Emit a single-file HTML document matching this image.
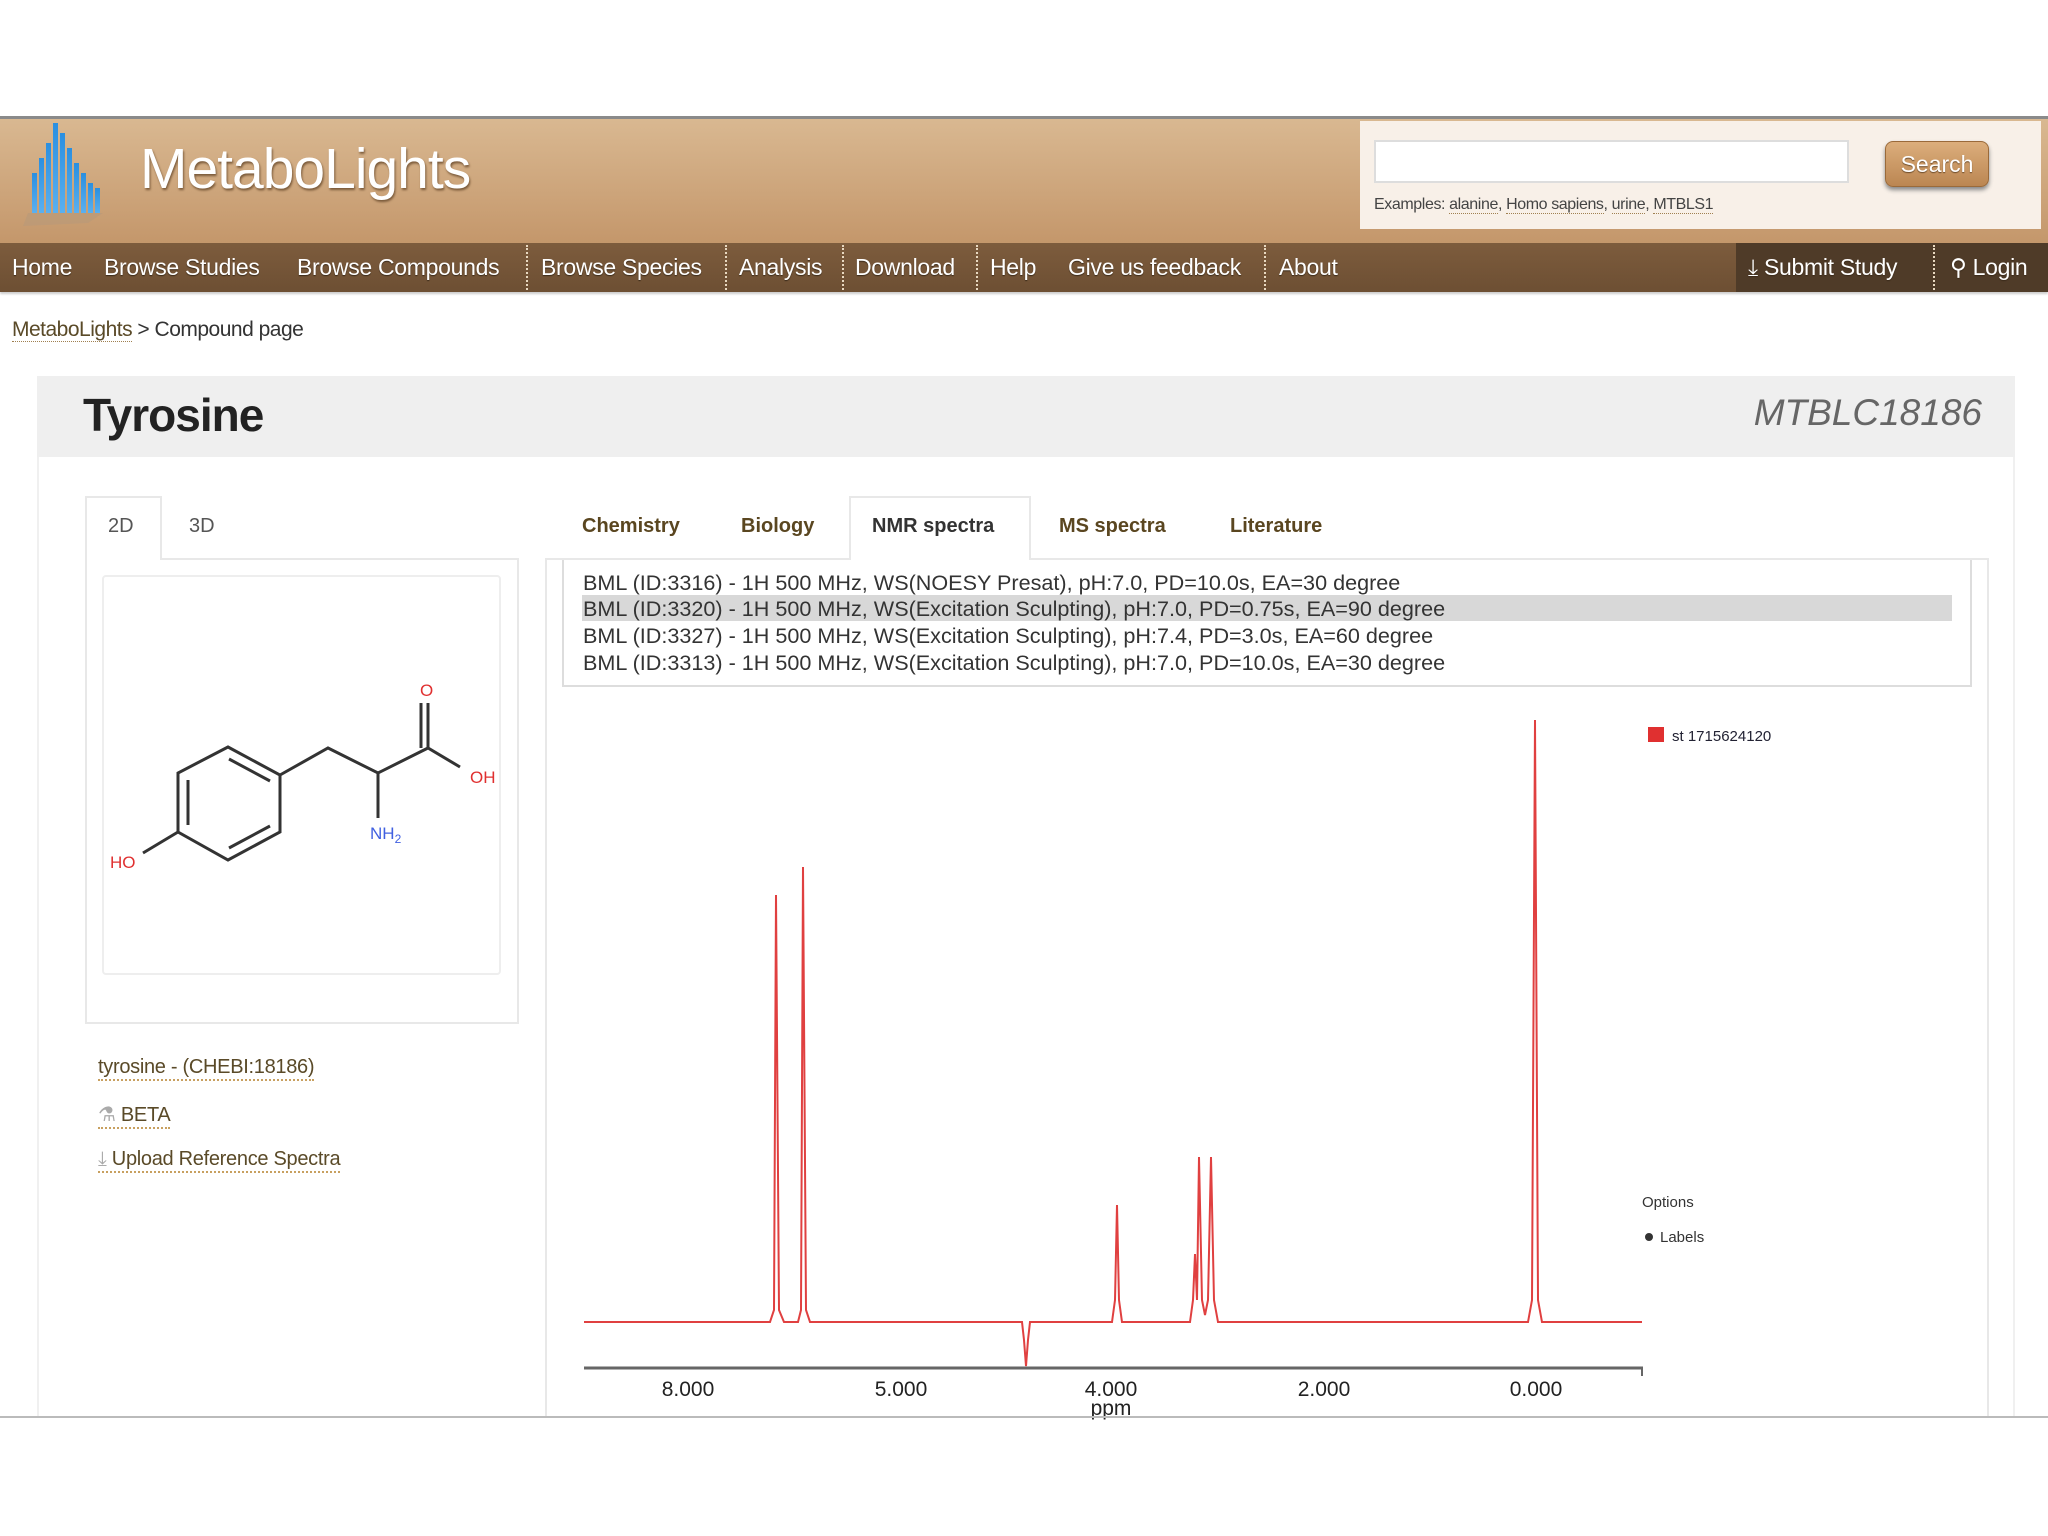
<!DOCTYPE html>
<html><head><meta charset="utf-8"><style>
*{margin:0;padding:0;box-sizing:border-box}
body{width:2048px;height:1536px;background:#fff;position:relative;overflow:hidden;font-family:"Liberation Sans",sans-serif}
.a{position:absolute}
#hdr{left:0;top:116px;width:2048px;height:127px;background:linear-gradient(#d9b891,#c4976b);border-top:3px solid #8a8a8a}
#nav{left:0;top:243px;width:2048px;height:49px;background:linear-gradient(#7d5c3d,#6d4f33);box-shadow:0 2px 2px #ccc}
.ni{position:absolute;top:0;height:49px;line-height:49px;color:#fff;font-size:23px;letter-spacing:-0.3px;text-shadow:0 1px 1px #3a2a1a}
.sep{position:absolute;top:2px;height:45px;border-left:2px dotted #e8d8c0}
.tab{position:absolute;font-size:20px;font-weight:bold;color:#5a4620}
.li{position:absolute;left:583px;font-size:21.6px;color:#333;letter-spacing:0px;white-space:nowrap}
.lk{color:#5a4a28;border-bottom:2px dotted #c8a060;font-size:20px;position:absolute;left:98px;letter-spacing:-0.3px}
</style></head><body>
<div id="hdr" class="a"></div>
<svg class="a" style="left:18px;top:118px" width="100" height="110">
<defs><linearGradient id="bl" x1="0" y1="0" x2="0" y2="1"><stop offset="0" stop-color="#2a8fe0"/><stop offset="1" stop-color="#5ab0f0"/></linearGradient></defs>
<g fill="url(#bl)">
<rect x="14" y="55" width="5" height="40"/><rect x="21" y="40" width="5" height="55"/><rect x="28" y="25" width="5" height="70"/><rect x="35" y="5" width="5" height="90"/><rect x="42" y="15" width="5" height="80"/><rect x="49" y="30" width="5" height="65"/><rect x="56" y="45" width="5" height="50"/><rect x="63" y="55" width="5" height="40"/><rect x="70" y="65" width="5" height="30"/><rect x="77" y="70" width="5" height="25"/></g>
<path d="M10 95 L85 95 L70 105 L5 108Z" fill="#b89a7a" opacity=".6"/>
</svg>
<div class="a" style="left:140px;top:136px;font-size:57px;color:#fff;letter-spacing:-1px;text-shadow:1px 2px 2px #7a5a3a">MetaboLights</div>
<div class="a" style="left:1360px;top:121px;width:681px;height:108px;background:#f8f0e8"></div>
<div class="a" style="left:1374px;top:140px;width:475px;height:43px;background:#fff;border:2px solid #ddd"></div>
<div class="a" style="left:1885px;top:141px;width:104px;height:46px;border-radius:8px;background:linear-gradient(#dcae7c,#bb8652);border:1px solid #9a6a3a;box-shadow:0 3px 4px #888;color:#fff;font-size:23px;text-align:center;line-height:44px;text-shadow:0 1px 1px #6a4a2a">Search</div>
<div class="a" style="left:1374px;top:196px;font-size:16px;color:#444;letter-spacing:-0.4px">Examples: <span style="border-bottom:1px dotted #a08050">alanine</span>, <span style="border-bottom:1px dotted #a08050">Homo sapiens</span>, <span style="border-bottom:1px dotted #a08050">urine</span>, <span style="border-bottom:1px dotted #a08050">MTBLS1</span></div>
<div id="nav" class="a">
<span class="ni" style="left:12px">Home</span>
<span class="ni" style="left:104px">Browse Studies</span>
<span class="ni" style="left:297px">Browse Compounds</span>
<span class="sep" style="left:526px"></span>
<span class="ni" style="left:541px">Browse Species</span>
<span class="sep" style="left:725px"></span>
<span class="ni" style="left:739px">Analysis</span>
<span class="sep" style="left:842px"></span>
<span class="ni" style="left:855px">Download</span>
<span class="sep" style="left:976px"></span>
<span class="ni" style="left:990px">Help</span>
<span class="ni" style="left:1068px">Give us feedback</span>
<span class="sep" style="left:1264px"></span>
<span class="ni" style="left:1279px">About</span>
<div class="a" style="left:1736px;top:0;width:312px;height:49px;background:#4f3b28"></div>
<span class="ni" style="left:1748px">⤓ Submit Study</span>
<span class="sep" style="left:1933px"></span>
<span class="ni" style="left:1950px">⚲ Login</span>
</div>
<div class="a" style="left:12px;top:318px;font-size:21px;color:#333;letter-spacing:-0.5px"><span style="color:#5a4a28;border-bottom:1px dotted #a08050">MetaboLights</span> &gt; Compound page</div>
<div class="a" style="left:37px;top:376px;width:1978px;height:1040px;border:2px solid #f0f0f0;border-bottom:none"></div>
<div class="a" style="left:37px;top:376px;width:1978px;height:81px;background:#efefef"></div>
<div class="a" style="left:83px;top:388px;font-size:46px;font-weight:bold;color:#222;letter-spacing:-1px">Tyrosine</div>
<div class="a" style="left:1740px;top:392px;width:242px;text-align:right;font-size:37px;font-style:italic;color:#666">MTBLC18186</div>
<div class="a" style="left:85px;top:496px;width:77px;height:64px;border:2px solid #e8e8e8;border-bottom:none;background:#fff;z-index:2"></div>
<div class="a" style="left:108px;top:515px;font-size:20px;color:#555;z-index:3">2D</div>
<div class="a" style="left:189px;top:515px;font-size:20px;color:#555">3D</div>
<div class="a" style="left:85px;top:558px;width:434px;height:466px;border:2px solid #e8e8e8"></div>
<div class="a" style="left:102px;top:575px;width:399px;height:400px;border:2px solid #eee;border-radius:4px"></div>
<svg class="a" style="left:0;top:0" width="600" height="900" font-family="Liberation Sans" font-size="17">
<g stroke="#333" stroke-width="3" fill="none">
<path d="M228 747 L280 775 L280 832 L228 860 L178 832 L178 773 Z"/>
<path d="M229 759 L270 781 M270 826 L229 848 M188 780 L188 825"/>
<path d="M280 775 L328 748 L378 773 L428 748 L460 767"/>
<path d="M378 773 L378 818 M178 832 L143 853 M428 748 L428 703 M421 748 L421 703"/>
</g>
<text x="420" y="696" fill="#e03030">O</text>
<text x="470" y="783" fill="#e03030">OH</text>
<text x="370" y="839" fill="#4060e0">NH<tspan font-size="12" dy="4">2</tspan></text>
<text x="110" y="868" fill="#e03030">HO</text>
</svg>
<div class="lk" style="top:1056px">tyrosine - (CHEBI:18186)</div>
<div class="lk" style="top:1102px"><span style="color:#aaa">⚗</span> BETA</div>
<div class="lk" style="top:1148px"><span style="color:#aaa">⤓</span> Upload Reference Spectra</div>
<div class="a" style="left:849px;top:496px;width:182px;height:64px;border:2px solid #e8e8e8;border-bottom:none;background:#fff;z-index:2"></div>
<div class="tab" style="left:582px;top:515px">Chemistry</div>
<div class="tab" style="left:741px;top:515px">Biology</div>
<div class="tab" style="left:872px;top:515px;color:#333;z-index:3">NMR spectra</div>
<div class="tab" style="left:1059px;top:515px">MS spectra</div>
<div class="tab" style="left:1230px;top:515px">Literature</div>
<div class="a" style="left:545px;top:558px;width:1444px;height:858px;border:2px solid #e8e8e8;border-bottom:none"></div>
<div class="a" style="left:562px;top:560px;width:1410px;height:127px;border:2px solid #ddd;border-top:none;overflow:hidden">
<div class="a" style="left:18px;top:35px;width:1370px;height:26px;background:#d8d8d8"></div>
</div>
<div class="li" style="top:570px">BML (ID:3316) - 1H 500 MHz, WS(NOESY Presat), pH:7.0, PD=10.0s, EA=30 degree</div>
<div class="li" style="top:596px">BML (ID:3320) - 1H 500 MHz, WS(Excitation Sculpting), pH:7.0, PD=0.75s, EA=90 degree</div>
<div class="li" style="top:623px">BML (ID:3327) - 1H 500 MHz, WS(Excitation Sculpting), pH:7.4, PD=3.0s, EA=60 degree</div>
<div class="li" style="top:650px">BML (ID:3313) - 1H 500 MHz, WS(Excitation Sculpting), pH:7.0, PD=10.0s, EA=30 degree</div>
<svg class="a" style="left:0;top:0" width="2048" height="1536" font-family="Liberation Sans">
<path d="M584 1322 L770 1322 L774 1310 L776 895 L779 1310 L784 1322 L798 1322 L801 1310 L803 867 L806 1310 L810 1322 L1022 1322 L1024 1340 L1026 1366 L1028 1340 L1030 1322 L1112 1322 L1115 1300 L1117 1205 L1119 1300 L1122 1322 L1190 1322 L1193 1300 L1195 1254 L1197 1300 L1199 1157 L1202 1300 L1205 1315 L1208 1300 L1211 1157 L1214 1300 L1218 1322 L1528 1322 L1532 1300 L1535 720 L1538 1300 L1542 1322 L1642 1322" fill="none" stroke="#e04040" stroke-width="2"/>
<line x1="584" y1="1368" x2="1643" y2="1368" stroke="#666" stroke-width="3"/>
<line x1="1642" y1="1368" x2="1642" y2="1376" stroke="#666" stroke-width="2"/>
<g font-size="21" fill="#222" text-anchor="middle">
<text x="688" y="1396">8.000</text><text x="901" y="1396">5.000</text><text x="1111" y="1396">4.000</text><text x="1324" y="1396">2.000</text><text x="1536" y="1396">0.000</text>
<text x="1111" y="1415">ppm</text></g>
<rect x="1648" y="727" width="16" height="15" fill="#e03030"/>
<text x="1672" y="741" font-size="15" fill="#223">st 1715624120</text>
<text x="1642" y="1207" font-size="15" fill="#333">Options</text>
<circle cx="1649" cy="1237" r="4" fill="#333"/>
<text x="1660" y="1242" font-size="15" fill="#333">Labels</text>
</svg>
<div class="a" style="left:0;top:1416px;width:2048px;height:2px;background:#bbb"></div>
</body></html>
